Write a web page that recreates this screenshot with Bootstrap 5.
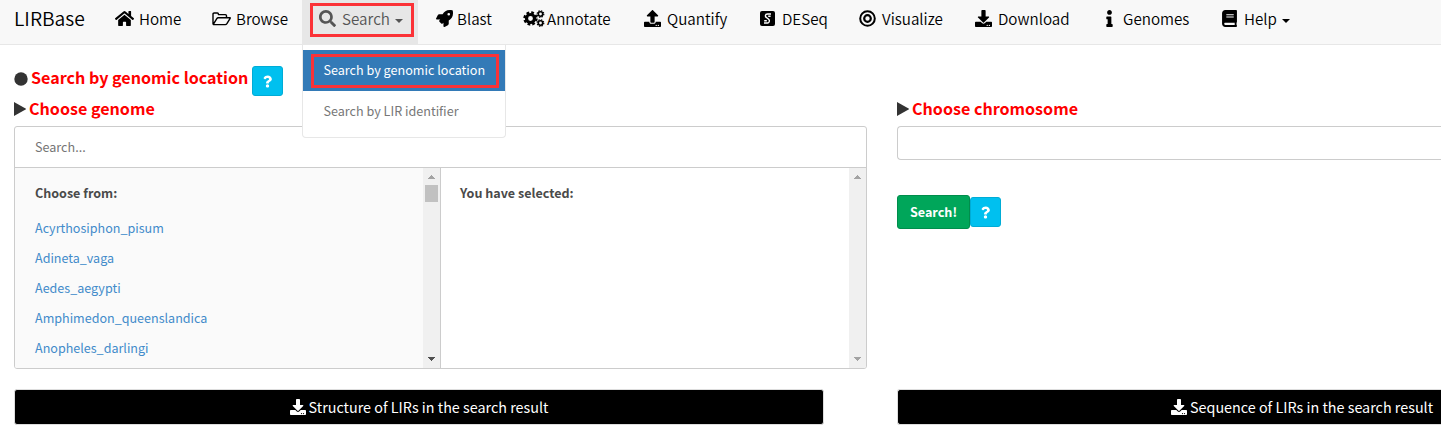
<!DOCTYPE html>
<html lang="en">
<head>
<meta charset="utf-8">
<meta name="viewport" content="width=device-width, initial-scale=1">
<title>LIRBase</title>
<link rel="stylesheet" href="https://cdn.jsdelivr.net/npm/bootstrap@5.3.0/dist/css/bootstrap.min.css">
<style>
body{font-family:"Noto Sans CJK SC","Open Sans",sans-serif;font-size:12.6px;color:#333;overflow:hidden;height:430px}
.topbar{height:45px;background:#f8f8f8;border-bottom:1px solid #e7e7e7;font-size:15.2px;line-height:37px;color:#000;white-space:nowrap;font-weight:350}
.brand{width:100px;padding-left:14px;font-size:19.3px;line-height:37px}
.menu-item{position:relative;height:44px;padding-left:15px;color:#000;flex:none;display:flex}
.menu-item .slot{width:24px;flex:none;display:flex;align-items:center;height:37px}
.w97{width:97px}.w105{width:105px}.w116{width:116px}.w90{width:90px}.w120{width:120px}.w115{width:115px}.w100{width:100px}.w125{width:125px}.w121{width:121px}
.current{background:#e7e7e7;color:#555}
.tri{border:4.5px solid transparent;border-top-color:currentColor;border-bottom:0;margin:19px 0 0 5px;height:0}
.ring{position:absolute;border:3px solid #fb3237}
.submenu{position:absolute;left:0;top:45px;width:204px;height:93px;background:#fff;border:1px solid #e7e7e7;border-top:0;border-radius:0 0 4px 4px;padding-top:5px;z-index:5;line-height:39px;font-size:12.6px;font-weight:400;color:#777}
.submenu>div{padding-left:20.5px;height:41px}
.submenu .chosen{background:#337ab7;color:#fff}
.half{width:883px;flex:none;padding:0 16px 0 14px}
.rest{flex:1 1 0;min-width:0;padding-left:14px}
.title-red{color:#f00;font-weight:700;font-size:16.1px;line-height:24px}
.location{padding-top:20px;height:52px}
.dot{margin:7px 3px 0 0}
.arrow{margin:5px 3px 0 0}
.choose{height:29px;line-height:22px}
.help{width:31px;height:30px;background:#00c0ef;border:1px solid #00acd6;border-radius:3px;display:flex;align-items:center;justify-content:center;color:#fff}
.location .help{margin:1px 0 0 4px}
.picker{height:243px;border:1px solid #ccc;border-radius:3px;overflow:hidden}
.filter{height:41px;border-bottom:1px solid #ccc;padding-left:20px;line-height:40px;color:#757575}
.lists{height:200px}
.from{width:426px;background:#fafafa;border-right:1px solid #ccc}
.entries{padding:10px 0 0 20px;line-height:30px;color:#428bca;font-size:12.55px}
.entries b{display:block;color:#4a4a4a;margin-bottom:5px}
.picked{padding-left:19px}
.sbar{width:17px;background:#f0f0f0;display:flex;flex-direction:column;align-items:center;padding:7px 0;color:#a3a3a3}
.thumb{width:13px;height:17px;background:#c1c1c1;margin-top:6px}
.dl{width:810px;height:36px;background:#000;border:1px solid #ddd;border-radius:3px;color:#fff;font-size:14.35px;margin-top:20px}
.dl svg{margin-right:3px}
.rest .dl{width:auto;border-right:0;border-radius:3px 0 0 3px;margin-top:160px;padding-left:273px;white-space:nowrap}
.chrom{height:34px;border:1px solid #ccc;border-right:0;border-radius:4px 0 0 4px}
.submit{margin-top:35px;height:34px}
.go{width:73px;height:34px;background:#00a65a;border:1px solid #008d4c;border-radius:3px;color:#fff;font-weight:700}
</style>
</head>
<body>
<svg width="0" height="0" class="position-absolute">
<defs>
<symbol id="download" viewBox="0 0 512 512"><path fill="currentColor" d="M216 0h80c13.3 0 24 10.7 24 24v168h87.7c17.8 0 26.7 21.5 14.1 34.1L269.7 378.3c-7.5 7.5-19.8 7.5-27.3 0L90.1 226.1c-12.6-12.6-3.7-34.1 14.1-34.1H192V24c0-13.3 10.7-24 24-24zm296 376v112c0 13.3-10.7 24-24 24H24c-13.3 0-24-10.7-24-24V376c0-13.3 10.7-24 24-24h146.7l49 49c20.1 20.1 52.5 20.1 72.6 0l49-49H488c13.3 0 24 10.7 24 24zm-124 88c0-11-9-20-20-20s-20 9-20 20 9 20 20 20 20-9 20-20zm64 0c0-11-9-20-20-20s-20 9-20 20 9 20 20 20 20-9 20-20z"/></symbol>
<symbol id="question" viewBox="0 0 384 512"><path fill="currentColor" d="M202.021 0C122.202 0 70.503 32.703 29.914 91.026c-7.363 10.58-5.093 25.086 5.178 32.874l43.138 32.709c10.373 7.865 25.132 6.026 33.253-4.148 25.049-31.381 43.63-49.449 82.757-49.449 30.764 0 68.816 19.799 68.816 49.631 0 22.552-18.617 34.134-48.993 51.164-35.423 19.86-82.299 44.576-82.299 106.405V320c0 13.255 10.745 24 24 24h72.471c13.255 0 24-10.745 24-24v-5.773c0-42.86 125.268-44.645 125.268-160.627C377.504 66.256 286.902 0 202.021 0zM192 373.459c-38.196 0-69.271 31.075-69.271 69.271 0 38.195 31.075 69.27 69.271 69.27s69.271-31.075 69.271-69.271-31.075-69.27-69.271-69.27z"/></symbol>
<symbol id="up" viewBox="0 0 7 4"><path fill="currentColor" d="M3 0h1v1h1v1h1v1h1v1H0V3h1V2h1V1h1z"/></symbol>
<symbol id="down" viewBox="0 0 7 4"><path fill="currentColor" d="M3 4h1V3h1V2h1V1h1V0H0v1h1v1h1v1h1z"/></symbol>
</defs>
</svg>
<nav class="topbar d-flex">
  <div class="brand flex-shrink-0">LIRBase</div>
  <div class="menu-item w97"><span class="slot"><svg width="19" height="17" viewBox="0 0 576 512"><path d="M280.37 148.26L96 300.11V464a16 16 0 0 0 16 16l112.06-.29a16 16 0 0 0 15.92-16V368a16 16 0 0 1 16-16h64a16 16 0 0 1 16 16v95.64a16 16 0 0 0 16 16.05L464 480a16 16 0 0 0 16-16V300L295.67 148.26a12.19 12.19 0 0 0-15.3 0zM571.6 251.47L488 182.56V44.05a12 12 0 0 0-12-12h-56a12 12 0 0 0-12 12v72.61L318.47 43a48 48 0 0 0-61 0L4.34 251.47a12 12 0 0 0-1.6 16.9l25.5 31A12 12 0 0 0 45.15 301l235.22-193.74a12.19 12.19 0 0 1 15.3 0L530.9 301a12 12 0 0 0 16.9-1.6l25.5-31a12 12 0 0 0-1.7-16.93z"/></svg></span>Home</div>
  <div class="menu-item w105"><span class="slot"><svg width="19" height="14" viewBox="0 0 19 14" fill="none" stroke="#000" stroke-width="1.4" stroke-linejoin="round"><path d="M1 11.5V2.2Q1 1 2.2 1h3.2q1 0 1 1v.6h7q1.1 0 1.1 1.1V5.5M1.3 12.3L4.8 6.6Q5.3 5.8 6.2 5.8H18Q18.400 5.900 18 6.600L14.900 11.700Q14.300 12.600 13.300 12.600H2Q1 12.600 1 11.500"/></svg></span>Browse</div>
  <div class="menu-item w116 current"><span class="slot me-1"><svg width="17" height="17" viewBox="0 0 512 512" style="margin-left:2px" fill="currentColor"><path d="M505 442.700L405.300 343c-4.500-4.500-10.600-7-17-7H372c27.600-35.300 44-79.700 44-128C416 93.100 322.900 0 208 0S0 93.100 0 208s93.100 208 208 208c48.300 0 92.700-16.400 128-44v16.300c0 6.400 2.500 12.500 7 17l99.700 99.700c9.400 9.400 24.600 9.400 33.900 0l28.300-28.300c9.400-9.400 9.400-24.600.1-34zM208 336c-70.700 0-128-57.200-128-128 0-70.700 57.200-128 128-128 70.700 0 128 57.200 128 128 0 70.700-57.200 128-128 128z"/></svg></span><span style="margin-left:-3px">Search</span><span class="tri"></span>
    <div class="ring" style="left:8px;top:3px;width:104px;height:34px"></div>
    <div class="submenu"><div class="chosen">Search by genomic location</div><div>Search by LIR identifier</div><div class="ring" style="left:8px;top:9px;width:188px;height:34px;padding:0"></div></div>
  </div>
  <div class="menu-item w90"><span class="slot"><svg width="17" height="17" viewBox="0 0 512 512" class="ms-auto me-1"><path d="M505.120 19.094c-1.189-5.531-6.658-11-12.207-12.188C460.716 0 435.507 0 410.407 0 307.175 0 245.269 55.203 199.052 128H94.838c-16.348.016-35.557 11.875-42.887 26.484L2.516 253.297A28.400 28.400 0 0 0 0 264a24.009 24.009 0 0 0 24.006 24h103.810l-22.475 22.469c-11.365 11.361-12.996 32.258 0 45.250l50.905 50.906c11.156 11.188 32.156 13.156 45.277 0l22.475-22.469V488a24.009 24.009 0 0 0 24.006 24 28.559 28.559 0 0 0 10.707-2.516l98.728-49.390c14.629-7.297 26.508-26.500 26.508-42.860V312.797c72.598-46.313 128.035-108.406 128.035-211.094.093-25.203.093-50.406-6.862-82.609zM384.040 168A40 40 0 1 1 424.050 128 40.023 40.023 0 0 1 384.040 168z"/></svg></span>Blast</div>
  <div class="menu-item w120"><span class="slot"><svg width="22" height="17" viewBox="0 0 22 17" fill="none" stroke="#000"><circle cx="7.500" cy="8.500" r="4" stroke-width="3.200"/><circle cx="7.500" cy="8.500" r="6" stroke-width="2.400" stroke-dasharray="2.700 2.012"/><circle cx="17.500" cy="4" r="2.200" stroke-width="1.600"/><circle cx="17.500" cy="4" r="3.300" stroke-width="1.200" stroke-dasharray="1.400 1.192"/><circle cx="17.500" cy="13" r="2.200" stroke-width="1.600"/><circle cx="17.500" cy="13" r="3.300" stroke-width="1.200" stroke-dasharray="1.400 1.192"/></svg></span>Annotate</div>
  <div class="menu-item w115"><span class="slot"><svg width="17" height="17" viewBox="0 0 512 512" style="margin-left:1px"><path d="M296 384h-80c-13.300 0-24-10.700-24-24V192h-87.700c-17.800 0-26.700-21.500-14.100-34.100L242.300 5.700c7.500-7.500 19.800-7.500 27.300 0l152.200 152.200c12.600 12.600 3.700 34.100-14.100 34.100H320v168c0 13.300-10.700 24-24 24zm216-8v112c0 13.300-10.700 24-24 24H24c-13.300 0-24-10.700-24-24V376c0-13.300 10.700-24 24-24h136v8c0 30.900 25.100 56 56 56h80c30.900 0 56-25.100 56-56v-8h136c13.300 0 24 10.700 24 24zm-124 88c0-11-9-20-20-20s-20 9-20 20 9 20 20 20 20-9 20-20zm64 0c0-11-9-20-20-20s-20 9-20 20 9 20 20 20 20-9 20-20z"/></svg></span>Quantify</div>
  <div class="menu-item w100"><span class="slot"><svg width="15" height="15" viewBox="0 0 15 15" style="margin-left:2px"><rect width="15" height="15" rx="2"/><path d="M11 3H7.500Q5.600 3 5.400 4.500T6.500 6.500L8.700 8.300Q9.800 9.300 9.200 10.700T7.500 12H4M8.200 5.200h2.400M4.200 9.800h2.600" fill="none" stroke="#fff" stroke-width="1.400"/></svg></span>DESeq</div>
  <div class="menu-item w116"><span class="slot"><svg width="17" height="17" viewBox="0 0 17 17" fill="none" stroke="#000" style="margin-left:1px"><circle cx="8.500" cy="8.500" r="7.300" stroke-width="2"/><circle cx="8.500" cy="8.500" r="3.300" stroke-width="2.200"/></svg></span>Visualize</div>
  <div class="menu-item w125"><span class="slot"><svg width="17" height="17" style="margin-left:1px"><use href="#download"/></svg></span>Download</div>
  <div class="menu-item w121"><span class="slot"><svg width="7" height="17" viewBox="0 0 192 512" style="margin-left:7px"><path d="M20 424.229h20V279.771H20c-11.046 0-20-8.954-20-20V212c0-11.046 8.954-20 20-20h112c11.046 0 20 8.954 20 20v212.229h20c11.046 0 20 8.954 20 20V492c0 11.046-8.954 20-20 20H20c-11.046 0-20-8.954-20-20v-47.771c0-11.046 8.954-20 20-20zM96 0C56.235 0 24 32.235 24 72s32.235 72 72 72 72-32.235 72-72S135.764 0 96 0z"/></svg></span>Genomes</div>
  <div class="menu-item"><span class="slot"><svg width="15" height="17" viewBox="0 0 448 512" style="margin-left:2px"><path d="M448 360V24c0-13.300-10.700-24-24-24H96C43 0 0 43 0 96v320c0 53 43 96 96 96h328c13.300 0 24-10.700 24-24v-16c0-7.500-3.500-14.300-8.900-18.700-4.200-15.400-4.200-59.300 0-74.700 5.400-4.300 8.900-11.100 8.900-18.600zM128 134c0-3.300 2.700-6 6-6h212c3.300 0 6 2.700 6 6v20c0 3.300-2.700 6-6 6H134c-3.300 0-6-2.700-6-6v-20zm0 64c0-3.300 2.700-6 6-6h212c3.300 0 6 2.700 6 6v20c0 3.300-2.700 6-6 6H134c-3.300 0-6-2.700-6-6v-20zm253.400 250H96c-17.700 0-32-14.300-32-32 0-17.600 14.400-32 32-32h285.400c-1.900 17.100-1.900 46.900 0 64z"/></svg></span>Help<span class="tri"></span></div>
</nav>
<main class="d-flex">
  <section class="half">
    <div class="d-flex title-red location">
      <svg width="14" height="14" class="dot flex-shrink-0"><circle cx="7" cy="7" r="6.700" fill="#333"/></svg><span>Search by genomic location</span>
      <span class="help"><svg width="9" height="13"><use href="#question"/></svg></span>
    </div>
    <div class="d-flex title-red choose">
      <svg width="12" height="14" class="arrow flex-shrink-0"><path d="M0 0L12.500 7L0 14z" fill="#333"/></svg><span>Choose genome</span>
    </div>
    <div class="picker">
      <div class="filter">Search...</div>
      <div class="lists d-flex">
        <div class="from d-flex justify-content-between">
          <div class="entries"><b>Choose from:</b><div>Acyrthosiphon_pisum</div><div>Adineta_vaga</div><div>Aedes_aegypti</div><div>Amphimedon_queenslandica</div><div>Anopheles_darlingi</div></div>
          <div class="sbar"><svg width="7" height="4"><use href="#up"/></svg><span class="thumb"></span><svg width="7" height="4" class="mt-auto" color="#505050"><use href="#down"/></svg></div>
        </div>
        <div class="flex-grow-1 d-flex justify-content-between">
          <div class="entries picked"><b>You have selected:</b></div>
          <div class="sbar"><svg width="7" height="4"><use href="#up"/></svg><svg width="7" height="4" class="mt-auto"><use href="#down"/></svg></div>
        </div>
      </div>
    </div>
    <div class="dl d-flex align-items-center justify-content-center"><svg width="16" height="16"><use href="#download"/></svg>Structure of LIRs in the search result</div>
  </section>
  <section class="rest">
    <div class="d-flex title-red choose" style="margin-top:52px">
      <svg width="12" height="14" class="arrow flex-shrink-0"><path d="M0 0L12.500 7L0 14z" fill="#333"/></svg><span>Choose chromosome</span>
    </div>
    <div class="chrom"></div>
    <div class="d-flex align-items-center submit">
      <span class="go d-flex align-items-center justify-content-center">Search!</span><span class="help"><svg width="9" height="13"><use href="#question"/></svg></span>
    </div>
    <div class="dl d-flex align-items-center"><svg width="16" height="16"><use href="#download"/></svg>Sequence of LIRs in the search result</div>
  </section>
</main>
<script src="https://cdn.jsdelivr.net/npm/bootstrap@5.3.0/dist/js/bootstrap.bundle.min.js"></script>
</body>
</html>
